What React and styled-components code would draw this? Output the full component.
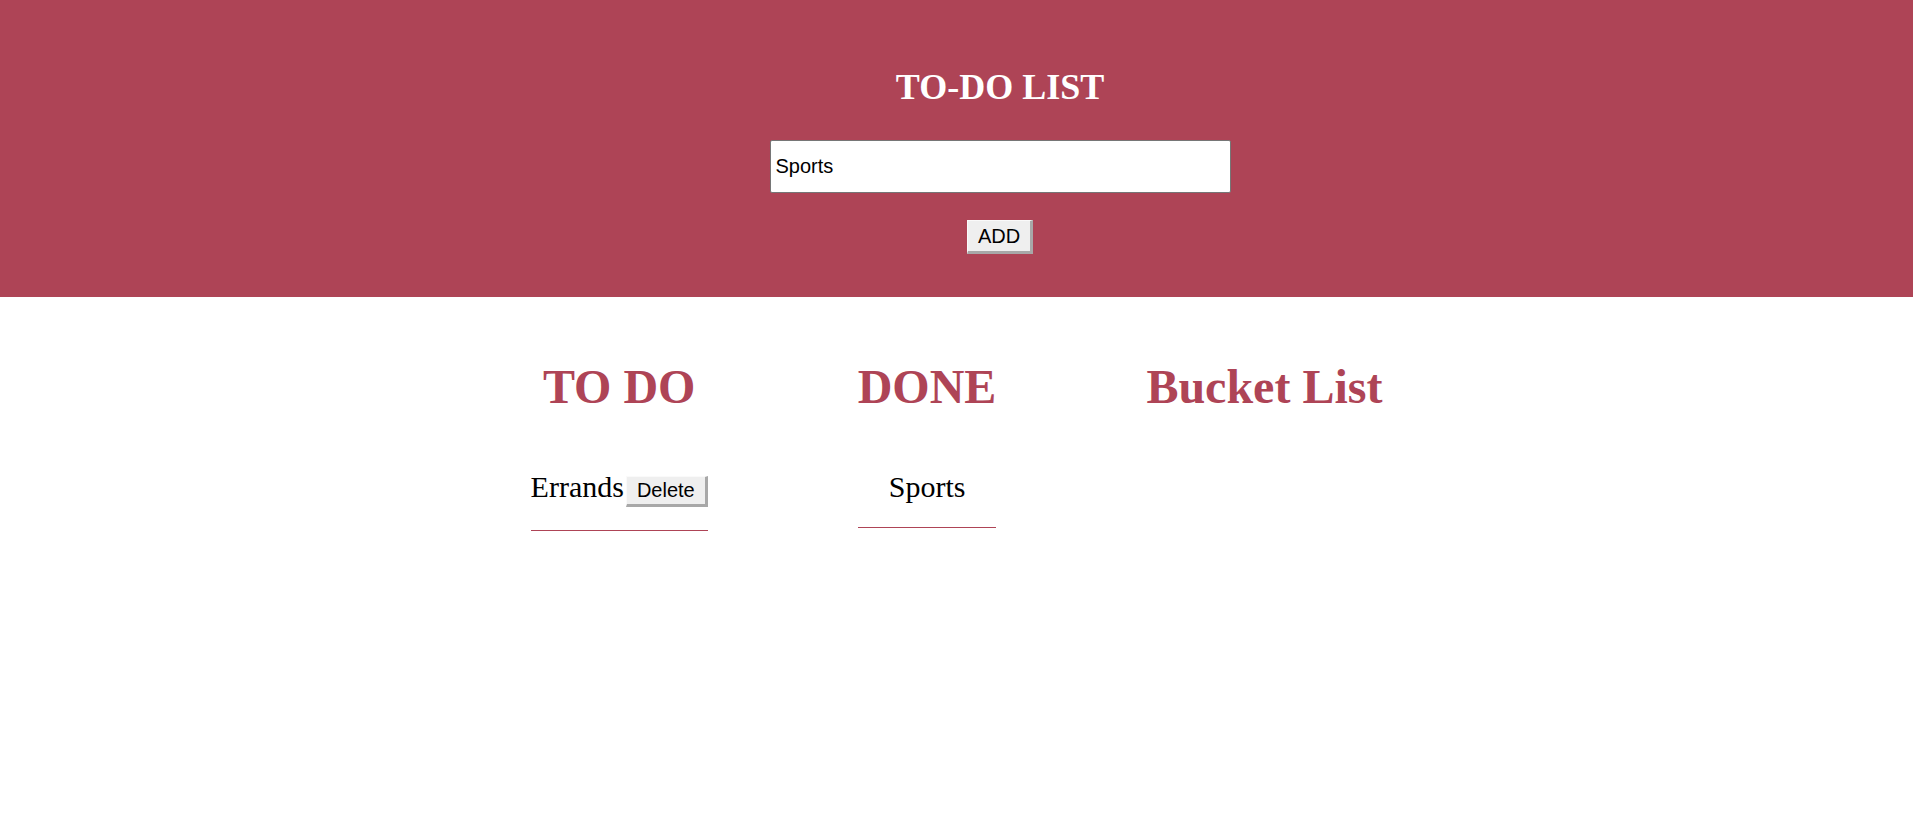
import React, { useState } from "react";
import styled, { createGlobalStyle } from "styled-components";

const RED = "#ae4456";

const Global = createGlobalStyle`
  html, body { margin: 0; padding: 0; background: #fff; }
  body { font-family: "Liberation Serif", "Times New Roman", serif; }
`;

const Header = styled.header`
  background: ${RED};
  height: 297px;
  box-sizing: border-box;
  padding: 67px 0 0 87px;
  display: flex;
  flex-direction: column;
  align-items: center;
`;

const Title = styled.h1`
  margin: 0;
  font-family: "Liberation Serif", "Times New Roman", serif;
  font-weight: bold;
  font-size: 36px;
  line-height: 41px;
  color: #fff;
`;

const TaskInput = styled.input`
  margin-top: 32px;
  width: 461px;
  height: 53px;
  box-sizing: border-box;
  border: 1px solid #767676;
  border-radius: 2px;
  padding: 0 5px;
  font-family: "Liberation Sans", Arial, sans-serif;
  font-size: 20px;
  color: #000;
  background: #fff;
  outline: none;
`;

const RaisedButton = styled.button`
  box-sizing: border-box;
  height: ${(p) => p.$h}px;
  padding: 0 ${(p) => p.$px}px;
  font-family: "Liberation Sans", Arial, sans-serif;
  font-size: 20px;
  color: #000;
  background: #efefef;
  border-style: solid;
  border-width: 1px 3px 3px 1px;
  border-color: #fafafa #a8a8a8 #a8a8a8 #fafafa;
  border-radius: 0;
  cursor: pointer;
`;

const AddButton = styled(RaisedButton)`
  margin-top: 27px;
  width: 66px;
`;

const DeleteButton = styled(RaisedButton)`
  margin-left: 2px;
  vertical-align: baseline;
`;

const Board = styled.main`
  display: flex;
  justify-content: center;
  align-items: flex-start;
  gap: 150px;
  padding-top: 63px;
`;

const Column = styled.section`
  display: flex;
  flex-direction: column;
`;

const ColumnTitle = styled.h2`
  margin: 0;
  font-family: "Liberation Serif", "Times New Roman", serif;
  font-weight: bold;
  font-size: 48px;
  line-height: 53px;
  color: ${RED};
  text-align: center;
  white-space: nowrap;
`;

const ItemList = styled.ul`
  list-style: none;
  margin: 57px 0 0;
  padding: 0;
`;

const Item = styled.li`
  font-family: "Liberation Serif", "Times New Roman", serif;
  font-size: 30px;
  line-height: 34px;
  color: #000;
  text-align: center;
  white-space: nowrap;
  padding-bottom: 23px;
  border-bottom: 1px solid ${RED};
`;

export default function App() {
  const [text, setText] = useState("Sports");
  const [todo, setTodo] = useState(["Errands"]);
  const [done] = useState(["Sports"]);

  return (
    <>
      <Global />
      <Header>
        <Title>TO-DO LIST</Title>
        <TaskInput value={text} onChange={(e) => setText(e.target.value)} />
        <AddButton $h={34} $px={0}>ADD</AddButton>
      </Header>
      <Board>
        <Column>
          <ColumnTitle>TO DO</ColumnTitle>
          <ItemList>
            {todo.map((t) => (
              <Item key={t}>
                {t}
                <DeleteButton
                  $h={31}
                  $px={10}
                  onClick={() => setTodo(todo.filter((x) => x !== t))}
                >
                  Delete
                </DeleteButton>
              </Item>
            ))}
          </ItemList>
        </Column>
        <Column>
          <ColumnTitle>DONE</ColumnTitle>
          <ItemList>
            {done.map((t) => (
              <Item key={t}>{t}</Item>
            ))}
          </ItemList>
        </Column>
        <Column>
          <ColumnTitle>Bucket List</ColumnTitle>
        </Column>
      </Board>
    </>
  );
}
